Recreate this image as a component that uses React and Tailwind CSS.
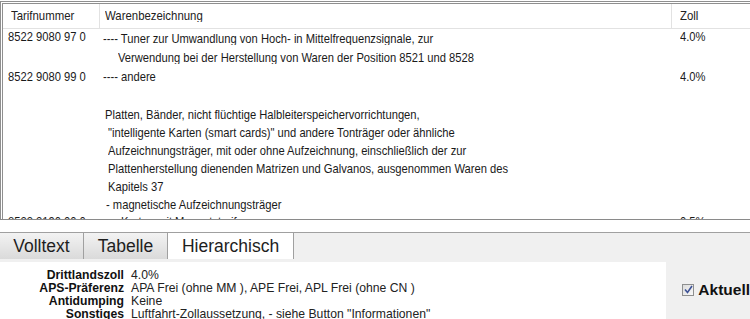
import React from "react";

function Check() {
  return (
    <div className="w-[12px] h-[12px] border border-[#8e8f8f] bg-gradient-to-br from-[#dcdcdc] to-[#f8f8f8] flex items-center justify-center">
      <svg width="9" height="9" viewBox="0 0 9 9">
        <path d="M1 4.5 L3.5 7.5 L8 1" fill="none" stroke="#3d5296" strokeWidth="1.6" />
      </svg>
    </div>
  );
}

function T({ className = "", children }) {
  return <div className={"origin-center scale-y-[1.18] " + className}>{children}</div>;
}

export default function App() {
  return (
    <div className="w-[750px] h-[319px] overflow-hidden bg-white text-[#1a1a1a]" style={{ fontFamily: '"Liberation Sans", Arial, sans-serif' }}>
      {/* Table */}
      <div className="h-[220px] pt-px border-b border-[#8a8a8a] overflow-hidden">
        <div className="h-full border-t-[3px] border-l-[3px] border-double border-[#8f8f8f] overflow-hidden text-[11.2px] whitespace-nowrap">
          <div className="flex h-[25px] border-b border-[#e2e2e2] text-[11.4px] text-[#222]">
            <div className="w-[97px] pl-[8px] flex items-center border-r border-[#e2e2e2]"><T>Tarifnummer</T></div>
            <div className="w-[572px] pl-[5px] flex items-center border-r border-[#e2e2e2]"><T>Warenbezeichnung</T></div>
            <div className="flex-1 pl-[8px] flex items-center"><T>Zoll</T></div>
          </div>
          <div className="leading-[19px]">
            <div className="flex">
              <T className="w-[97px] pl-[5px]">8522 9080 97 0</T>
              <div className="w-[572px] pl-[3px]">
                <T>---- Tuner zur Umwandlung von Hoch- in Mittelfrequenzsignale, zur</T>
                <T className="pl-[15px]">Verwendung bei der Herstellung von Waren der Position 8521 und 8528</T>
              </div>
              <T className="flex-1 pl-[8px]">4.0%</T>
            </div>
            <div className="flex items-start">
              <T className="w-[97px] pl-[5px]">8522 9080 99 0</T>
              <T className="w-[572px] pl-[3px]">---- andere</T>
              <T className="flex-1 pl-[8px]">4.0%</T>
            </div>
            <div className="flex">
              <div className="w-[97px]"></div>
              <div className="w-[572px] pl-[5px] pt-[19px] leading-[18px]">
                <T>Platten, Bänder, nicht flüchtige Halbleiterspeichervorrichtungen,</T>
                <T className="pl-[3px]">"intelligente Karten (smart cards)" und andere Tonträger oder ähnliche</T>
                <T className="pl-[3px]">Aufzeichnungsträger, mit oder ohne Aufzeichnung, einschließlich der zur</T>
                <T className="pl-[3px]">Plattenherstellung dienenden Matrizen und Galvanos, ausgenommen Waren des</T>
                <T className="pl-[3px]">Kapitels 37</T>
                <T className="pl-[1px] leading-[14px] mt-[2px]">- magnetische Aufzeichnungsträger</T>
              </div>
              <div className="flex-1"></div>
            </div>
            <div className="flex leading-[18px] mt-[1px]">
              <T className="w-[97px] pl-[5px]">8523 2190 00 0</T>
              <T className="w-[572px] pl-[3px]">---- Karten mit Magnetstreifen</T>
              <T className="flex-1 pl-[8px]">0.5%</T>
            </div>
          </div>
        </div>
      </div>
      <div className="h-[12px] bg-white"></div>
      {/* Lower area */}
      <div className="h-[87px] bg-[#f0f0f0] border-t border-[#a0a0a0] flex flex-col">
        <div className="flex h-[32px] text-[17.5px] text-[#1e1e1e]">
          <div className="w-[84px] flex items-center justify-center border-r border-[#a0a0a0] bg-gradient-to-b from-[#f3f3f3] to-[#dadada]">Volltext</div>
          <div className="w-[84px] flex items-center justify-center border-r border-[#a0a0a0] bg-gradient-to-b from-[#f3f3f3] to-[#dadada]">Tabelle</div>
          <div className="w-[126px] flex items-center justify-center border-r border-[#a0a0a0] bg-white">Hierarchisch</div>
        </div>
        <div className="flex flex-1 mt-[3px]">
          <div className="w-[667px] bg-white text-[12.2px] leading-[13px] flex gap-[7px] pt-[7px] whitespace-nowrap">
            <div className="w-[124px] text-right font-bold text-[#111]">
              <div>Drittlandszoll</div>
              <div>APS-Präferenz</div>
              <div>Antidumping</div>
              <div>Sonstiges</div>
            </div>
            <div className="text-[#222]">
              <div>4.0%</div>
              <div>APA Frei (ohne MM ), APE Frei, APL Frei (ohne CN )</div>
              <div>Keine</div>
              <div>Luftfahrt-Zollaussetzung, - siehe Button "Informationen"</div>
            </div>
          </div>
          <div className="flex-1 pl-[16px] pt-[16px]">
            <div className="flex items-center gap-[4px]">
              <Check />
              <span className="font-bold text-[15.5px] whitespace-nowrap text-[#111]">Aktuell</span>
            </div>
          </div>
        </div>
      </div>
    </div>
  );
}
